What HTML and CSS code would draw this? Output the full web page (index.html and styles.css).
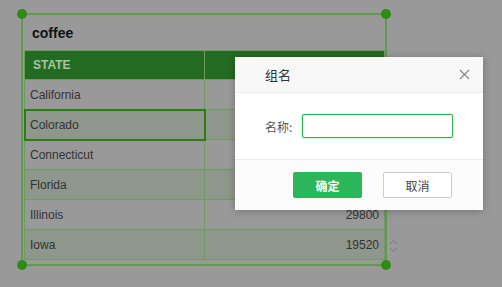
FILE: index.html
```html
<!DOCTYPE html>
<html lang="en">
<head>
  <meta charset="UTF-8" />
  <title>coffee</title>
  <link rel="stylesheet" href="styles.css">
</head>
<body>

<div class="widget">
  <span class="handle tl"></span>
  <span class="handle tr"></span>
  <span class="handle bl"></span>
  <span class="handle br"></span>
  <div class="widget-title">coffee</div>
  <table class="grid">
    <tr class="head"><th>STATE</th><th></th></tr>
    <tr><td>California</td><td></td></tr>
    <tr class="alt"><td class="picked">Colorado</td><td></td></tr>
    <tr><td>Connecticut</td><td></td></tr>
    <tr class="alt"><td>Florida</td><td></td></tr>
    <tr><td>Illinois</td><td class="num">29800</td></tr>
    <tr class="alt"><td>Iowa</td><td class="num">19520</td></tr>
  </table>
  <div class="scroller">
    <svg width="9" height="14" viewBox="0 0 9 14"><path d="M1 5 L4.5 1.5 L8 5 M1 9 L4.5 12.5 L8 9" fill="none" stroke="#777" stroke-width="1"/></svg>
  </div>
</div>

<div class="dialog">
  <div class="dialog-head">
    <span>组名</span>
    <svg class="close" width="11" height="11" viewBox="0 0 11 11"><path d="M1 1 L10 10 M10 1 L1 10" stroke="#888" stroke-width="1.2"/></svg>
  </div>
  <div class="dialog-body">
    <label>名称:</label>
    <input type="text" class="name-input">
  </div>
  <div class="dialog-foot">
    <button class="ok">确定</button>
    <button class="cancel">取消</button>
  </div>
</div>

</body>
</html>
```

FILE: styles.css
```css
body {
  margin: 0;
  background: #999999;
  font-family: "Liberation Sans", Arial, sans-serif;
  width: 502px;
  height: 287px;
  overflow: hidden;
  position: relative;
}

.widget {
  position: absolute;
  left: 21px;
  top: 13px;
  width: 362px;
  height: 249px;
  border: 2px solid #5f9a50;
}

.handle {
  position: absolute;
  width: 10px;
  height: 10px;
  border-radius: 50%;
  background: #2f8b14;
}
.handle.tl { left: -6px; top: -6px; }
.handle.tr { right: -6px; top: -6px; }
.handle.bl { left: -6px; bottom: -6px; }
.handle.br { right: -6px; bottom: -6px; }

.widget-title {
  height: 35px;
  line-height: 36px;
  padding-left: 9px;
  font-size: 14px;
  font-weight: bold;
  color: #111;
}

.grid {
  margin-left: 1px;
  width: 361px;
  border-collapse: collapse;
  font-size: 12px;
  color: #333;
}

.grid th,
.grid td {
  height: 29px;
  padding: 0 5px;
  border: 1px solid #6f9a62;
  text-align: left;
  font-weight: normal;
}

.grid th:first-child,
.grid td:first-child {
  width: 166px;
}

.grid .head th {
  height: 28px;
  background: #246b22;
  color: #a9c4a4;
  font-weight: bold;
  padding-left: 8px;
}

.grid .alt td {
  background: #8f968b;
}

.grid td.num {
  text-align: right;
  padding-right: 5px;
}

.grid td.picked {
  outline: 2px solid #2a7d12;
  outline-offset: -1px;
}

.scroller {
  position: absolute;
  right: -13px;
  bottom: 7px;
}

.dialog {
  position: absolute;
  left: 235px;
  top: 57px;
  width: 248px;
  background: #fff;
  border-radius: 2px;
  box-shadow: 0 1px 8px rgba(0, 0, 0, 0.25);
  font-family: "Noto Sans CJK SC", "Liberation Sans", sans-serif;
  color: #333;
}

.dialog-head {
  height: 35px;
  display: flex;
  align-items: center;
  justify-content: space-between;
  padding: 0 13px 0 30px;
  background: #f8f8f8;
  border-bottom: 1px solid #eaeaea;
  font-size: 13px;
}

.dialog-body {
  height: 66px;
  display: flex;
  align-items: center;
  padding-left: 30px;
  border-bottom: 1px solid #eaeaea;
  font-size: 12px;
  color: #555;
}

.dialog-body label {
  width: 37px;
}

.name-input {
  width: 141px;
  height: 22px;
  border: 1px solid #2bb24c;
  border-radius: 2px;
  padding: 0 4px;
  box-shadow: 0 0 2px rgba(43, 178, 76, 0.5);
  box-sizing: content-box;
  outline: none;
}

.dialog-foot {
  height: 50px;
  display: flex;
  align-items: center;
  padding-left: 58px;
  gap: 21px;
  background: #fcfcfc;
}

.dialog-foot button {
  width: 69px;
  height: 26px;
  border-radius: 2px;
  font-family: inherit;
  font-size: 12px;
  cursor: pointer;
}

.ok {
  background: #2bb65a;
  border: none;
  color: #fff;
  font-weight: bold;
}

.cancel {
  background: #fff;
  border: 1px solid #ccc;
  color: #444;
}
```
